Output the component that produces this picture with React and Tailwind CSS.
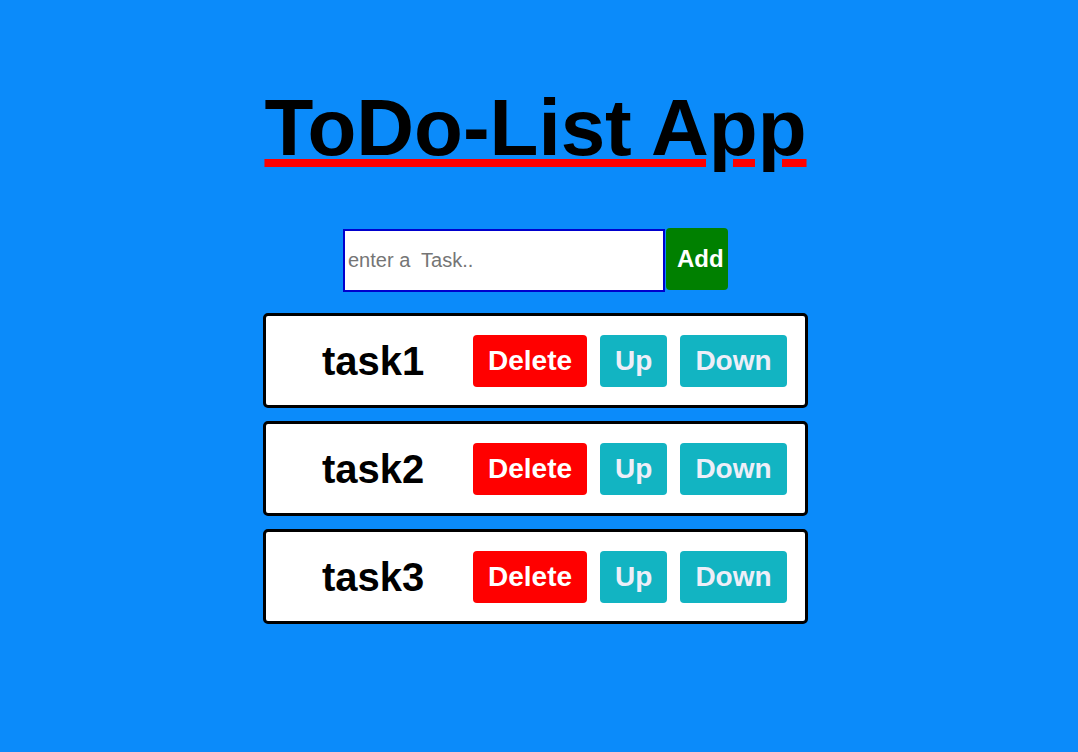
export default function App() {
  const tasks = ["task1", "task2", "task3"];
  return (
    <div
      className="min-h-screen w-full bg-[#0b8bfa] flex flex-col items-center pr-[7px]"
      style={{ fontFamily: '"Liberation Sans", Arial, sans-serif' }}
    >
      <h1 className="mt-[82px] text-[80px] leading-[92px] font-bold text-black underline decoration-[#ff0000]">
        ToDo-List App
      </h1>
      <div className="mt-[54px] flex items-start">
        <input
          type="text"
          placeholder="enter a  Task.."
          className="mt-px w-[322px] h-[63px] border-2 border-[#0000cd] bg-white pl-[3px] text-[20px] text-black placeholder:text-[#757575] outline-none"
        />
        <button className="ml-px w-[62px] h-[62px] bg-[#008000] rounded-[4px] text-white font-bold text-[24px] pl-[11px] text-left overflow-hidden whitespace-nowrap">
          Add
        </button>
      </div>
      <div className="mt-[21px] flex flex-col gap-[13px]">
        {tasks.map((t) => (
          <div
            key={t}
            className="w-[545px] h-[95px] border-[3px] border-black rounded-[5px] bg-white flex items-center"
          >
            <span className="ml-[56px] w-[151px] text-[40px] font-bold text-black">{t}</span>
            <div className="flex gap-[13px]">
              <button className="h-[52px] px-[15px] bg-[#ff0000] rounded-[4px] text-white font-bold text-[28px]">
                Delete
              </button>
              <button className="h-[52px] px-[15px] bg-[#12b4c2] rounded-[4px] text-[#eeeef8] font-bold text-[28px]">
                Up
              </button>
              <button className="h-[52px] px-[15px] bg-[#12b4c2] rounded-[4px] text-[#eeeef8] font-bold text-[28px]">
                Down
              </button>
            </div>
          </div>
        ))}
      </div>
    </div>
  );
}
